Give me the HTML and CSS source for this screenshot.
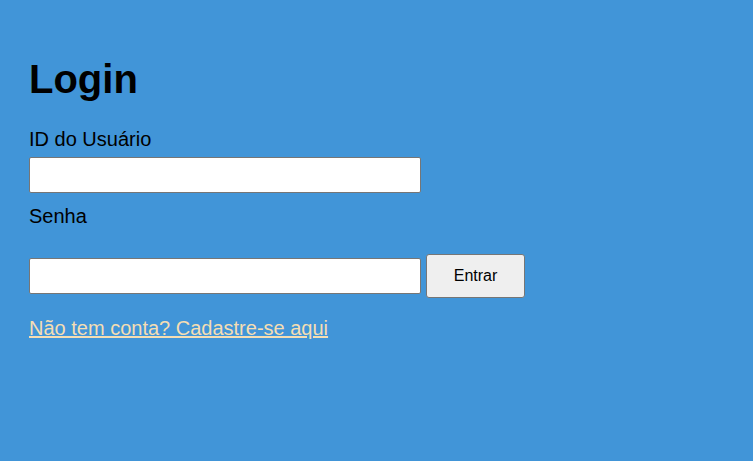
FILE: index.html
```html
<!DOCTYPE html>
<html lang="pt">
<head>
<meta charset="utf-8">
<title>Login</title>
<link rel="stylesheet" href="styles.css">
</head>
<body>
<div class="container">
  <h1 class="title">Login</h1>
  <form class="form">
    <label class="label" for="uid">ID do Usuário</label>
    <input class="input" id="uid" type="text">
    <label class="label label-senha" for="pwd">Senha</label>
    <div class="row">
      <input class="input" id="pwd" type="password">
      <button class="btn" type="button">Entrar</button>
    </div>
  </form>
  <a class="link" href="#">Não tem conta? Cadastre-se aqui</a>
</div>
</body>
</html>
```
FILE: styles.css
```css
html, body {
  margin: 0;
  padding: 0;
  background: #4195d8;
  height: 100%;
}
body {
  font-family: "Liberation Sans", Arial, sans-serif;
  color: #000;
}
.container {
  padding: 36px 29px;
}
.title {
  font-size: 40px;
  font-weight: bold;
  margin: 20px 0 26px;
  line-height: 46px;
}
.form {
  display: flex;
  flex-direction: column;
  align-items: flex-start;
}
.label {
  font-size: 20px;
  line-height: 23px;
}
.input {
  box-sizing: border-box;
  width: 392px;
  height: 36px;
  margin: 6px 0 0;
  border: 1px solid #767676;
  border-radius: 2px;
  background: #fff;
  font-size: 16px;
  padding: 0 8px;
}
.label-senha {
  margin-top: 12px;
}
.row {
  display: flex;
  align-items: center;
  gap: 5px;
  margin-top: 26px;
}
.row .input {
  margin: 0;
}
.btn {
  box-sizing: border-box;
  width: 99px;
  height: 44px;
  border: 1px solid #767676;
  border-radius: 3px;
  background: #efefef;
  font-family: "Liberation Sans", Arial, sans-serif;
  font-size: 16px;
  color: #000;
}
.link {
  display: inline-block;
  margin-top: 19px;
  font-size: 20px;
  color: #f5deb3;
  text-decoration: underline;
}
```
